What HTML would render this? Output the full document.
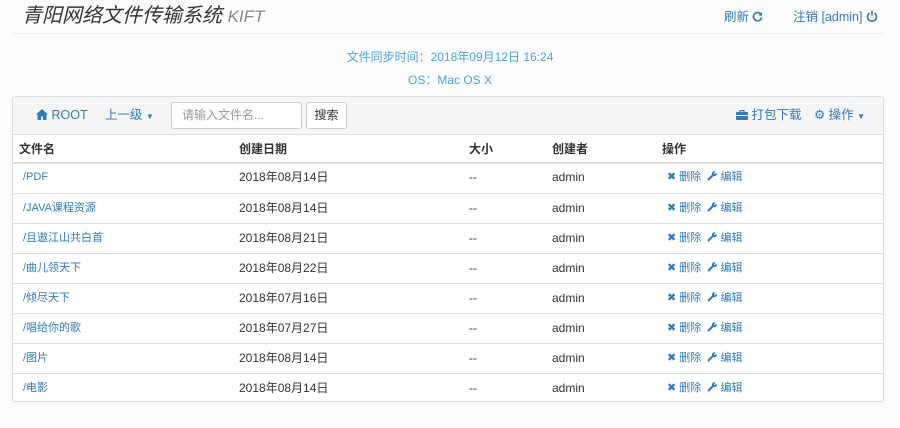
<!DOCTYPE html>
<html><head><meta charset="utf-8"><style>
*{box-sizing:border-box;margin:0;padding:0}
body{width:900px;height:428px;background:#fcfcfc;font-family:"Liberation Sans","Noto Sans CJK SC",sans-serif;font-size:12px;color:#333;position:relative;overflow:hidden}
.a{position:absolute;white-space:nowrap}
.blue{color:#337ab7}
.lb{color:#4aa3df}
.panel{position:absolute;left:12px;top:96px;width:872px;height:306px;border:1px solid #ddd;border-radius:3px;background:#fff;box-shadow:0 1px 2px rgba(0,0,0,.06)}
.bar{position:absolute;left:0;top:0;width:100%;height:38px;background:#f5f5f5;border-bottom:1px solid #ddd}
.bar .t{position:absolute;top:0;line-height:37px;font-size:12.5px;white-space:nowrap}
.row{position:absolute;left:0;width:100%;height:30px;border-top:1px solid #ddd}
.row span{position:absolute;top:0;line-height:29px;height:29px;font-size:12px;white-space:nowrap}
.row .n{left:10px;color:#337ab7;font-size:11px}
.hd span{position:absolute;top:0;line-height:28px;font-weight:bold;white-space:nowrap}
.op{left:654px;color:#337ab7;font-size:11px!important}
.op svg{vertical-align:-1px}
</style></head><body>
<div class="a" style="left:22px;top:2px;line-height:28px;font-size:20px;font-style:italic;color:#333">青阳网络文件传输系统 <span style="color:#888;font-size:17px">KIFT</span></div>
<div class="a blue" style="left:724px;top:8px;line-height:18px;font-size:12.5px">刷新 <svg width="11" height="11" viewBox="0 0 12 12" style="vertical-align:-1px"><path d="M10 4A4.5 4.5 0 1 0 10.5 7" fill="none" stroke="#337ab7" stroke-width="1.8"/><path d="M11 1v4H7z" fill="#337ab7"/></svg></div>
<div class="a blue" style="left:793px;top:8px;line-height:18px;font-size:12.5px">注销 [admin] <svg width="12" height="12" viewBox="0 0 12 12" style="vertical-align:-1px"><path d="M3.5 3A4.5 4.5 0 1 0 8.5 3" fill="none" stroke="#337ab7" stroke-width="1.6"/><path d="M6 0.5v5" stroke="#337ab7" stroke-width="1.6"/></svg></div>
<div class="a" style="left:12px;top:33px;width:872px;height:1px;background:#eee"></div>
<div class="a lb" style="left:0;width:900px;text-align:center;top:48px;line-height:18px;font-size:12px">文件同步时间：2018年09月12日 16:24</div>
<div class="a lb" style="left:0;width:900px;text-align:center;top:71px;line-height:18px;font-size:12px">OS：Mac OS X</div>
<div class="panel">
<div class="bar">
<div class="t blue" style="left:23px"><svg width="12" height="11" viewBox="0 0 12 11" style="vertical-align:-1px"><path d="M6 0L0 5.5h1.5V11h3.5V7.5h2V11h3.5V5.5H12z" fill="#337ab7"/></svg> ROOT</div>
<div class="t blue" style="left:92px">上一级 <span style="font-size:8px">▼</span></div>
<div class="a" style="left:158px;top:5px;width:131px;height:27px;border:1px solid #ccc;border-radius:3px;background:#fff;color:#999;padding:0 10px;line-height:25px;font-size:12px">请输入文件名...</div>
<div class="a" style="left:293px;top:5px;width:41px;height:27px;border:1px solid #ccc;border-radius:3px;background:#fff;line-height:25px;text-align:center;font-size:12px">搜索</div>
<div class="t blue" style="left:723px"><svg width="12" height="10" viewBox="0 0 12 10" style="vertical-align:-1px"><rect x="0" y="2" width="12" height="8" rx="1" fill="#337ab7"/><rect x="4" y="0.6" width="4" height="3" fill="none" stroke="#337ab7" stroke-width="1.2"/><rect x="0" y="5" width="12" height="1" fill="#f5f5f5"/></svg> 打包下载</div>
<div class="t blue" style="left:801px">⚙ 操作 <span style="font-size:8px">▼</span></div>
</div>
<div class="a hd" style="left:0;top:38px;width:100%;height:29px;border-bottom:2px solid #ddd">
<span style="left:6px">文件名</span><span style="left:226px">创建日期</span><span style="left:456px">大小</span><span style="left:539px">创建者</span><span style="left:649px">操作</span></div>
<div class="row" style="top:66px;border-top:none"><span class="n">/PDF</span><span style="left:226px">2018年08月14日</span><span style="left:456px">--</span><span style="left:539px">admin</span><span class="op">✖ 删除 &nbsp;<svg width="10" height="10" viewBox="0 0 10 10"><path d="M1 9L6 4" stroke="#337ab7" stroke-width="2"/><path d="M5 3.5A2.5 2.5 0 0 1 8.5 0.5L7 2.5L7.8 3.2L9.6 1.6A2.5 2.5 0 0 1 6.5 5z" fill="#337ab7"/></svg> 编辑</span></div>
<div class="row" style="top:96px"><span class="n">/JAVA课程资源</span><span style="left:226px">2018年08月14日</span><span style="left:456px">--</span><span style="left:539px">admin</span><span class="op">✖ 删除 &nbsp;<svg width="10" height="10" viewBox="0 0 10 10"><path d="M1 9L6 4" stroke="#337ab7" stroke-width="2"/><path d="M5 3.5A2.5 2.5 0 0 1 8.5 0.5L7 2.5L7.8 3.2L9.6 1.6A2.5 2.5 0 0 1 6.5 5z" fill="#337ab7"/></svg> 编辑</span></div>
<div class="row" style="top:126px"><span class="n">/且遨江山共白首</span><span style="left:226px">2018年08月21日</span><span style="left:456px">--</span><span style="left:539px">admin</span><span class="op">✖ 删除 &nbsp;<svg width="10" height="10" viewBox="0 0 10 10"><path d="M1 9L6 4" stroke="#337ab7" stroke-width="2"/><path d="M5 3.5A2.5 2.5 0 0 1 8.5 0.5L7 2.5L7.8 3.2L9.6 1.6A2.5 2.5 0 0 1 6.5 5z" fill="#337ab7"/></svg> 编辑</span></div>
<div class="row" style="top:156px"><span class="n">/曲儿领天下</span><span style="left:226px">2018年08月22日</span><span style="left:456px">--</span><span style="left:539px">admin</span><span class="op">✖ 删除 &nbsp;<svg width="10" height="10" viewBox="0 0 10 10"><path d="M1 9L6 4" stroke="#337ab7" stroke-width="2"/><path d="M5 3.5A2.5 2.5 0 0 1 8.5 0.5L7 2.5L7.8 3.2L9.6 1.6A2.5 2.5 0 0 1 6.5 5z" fill="#337ab7"/></svg> 编辑</span></div>
<div class="row" style="top:186px"><span class="n">/倾尽天下</span><span style="left:226px">2018年07月16日</span><span style="left:456px">--</span><span style="left:539px">admin</span><span class="op">✖ 删除 &nbsp;<svg width="10" height="10" viewBox="0 0 10 10"><path d="M1 9L6 4" stroke="#337ab7" stroke-width="2"/><path d="M5 3.5A2.5 2.5 0 0 1 8.5 0.5L7 2.5L7.8 3.2L9.6 1.6A2.5 2.5 0 0 1 6.5 5z" fill="#337ab7"/></svg> 编辑</span></div>
<div class="row" style="top:216px"><span class="n">/唱给你的歌</span><span style="left:226px">2018年07月27日</span><span style="left:456px">--</span><span style="left:539px">admin</span><span class="op">✖ 删除 &nbsp;<svg width="10" height="10" viewBox="0 0 10 10"><path d="M1 9L6 4" stroke="#337ab7" stroke-width="2"/><path d="M5 3.5A2.5 2.5 0 0 1 8.5 0.5L7 2.5L7.8 3.2L9.6 1.6A2.5 2.5 0 0 1 6.5 5z" fill="#337ab7"/></svg> 编辑</span></div>
<div class="row" style="top:246px"><span class="n">/图片</span><span style="left:226px">2018年08月14日</span><span style="left:456px">--</span><span style="left:539px">admin</span><span class="op">✖ 删除 &nbsp;<svg width="10" height="10" viewBox="0 0 10 10"><path d="M1 9L6 4" stroke="#337ab7" stroke-width="2"/><path d="M5 3.5A2.5 2.5 0 0 1 8.5 0.5L7 2.5L7.8 3.2L9.6 1.6A2.5 2.5 0 0 1 6.5 5z" fill="#337ab7"/></svg> 编辑</span></div>
<div class="row" style="top:276px"><span class="n">/电影</span><span style="left:226px">2018年08月14日</span><span style="left:456px">--</span><span style="left:539px">admin</span><span class="op">✖ 删除 &nbsp;<svg width="10" height="10" viewBox="0 0 10 10"><path d="M1 9L6 4" stroke="#337ab7" stroke-width="2"/><path d="M5 3.5A2.5 2.5 0 0 1 8.5 0.5L7 2.5L7.8 3.2L9.6 1.6A2.5 2.5 0 0 1 6.5 5z" fill="#337ab7"/></svg> 编辑</span></div>
</div>
</body></html>
